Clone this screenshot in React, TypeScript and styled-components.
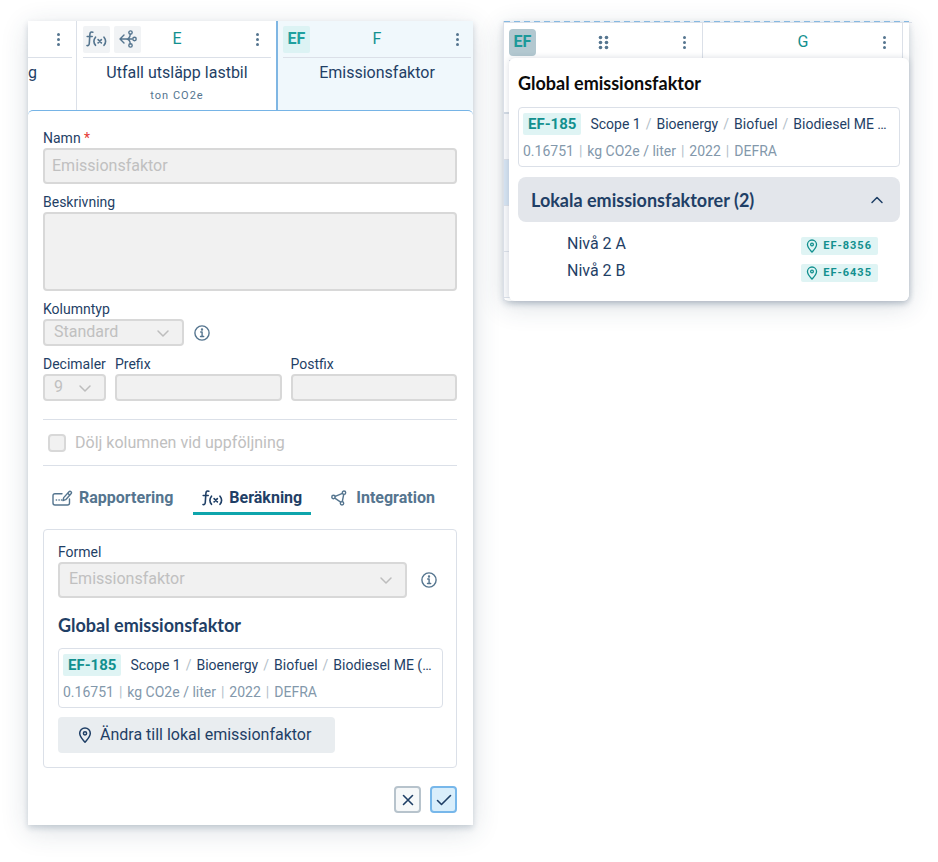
import React, { useId } from 'react';
import styled, { createGlobalStyle, css } from 'styled-components';

const navy = '#1f3f66';
const slate = '#55758f';
const teal = '#12908f';
const line = '#dbe0e8';
const mint = '#dff4f4';

const GlobalStyle = createGlobalStyle`
  *, *::before, *::after { box-sizing: border-box; }
  body {
    margin: 0;
    background: #fff;
    color: ${navy};
    font-family: Roboto, 'Liberation Sans', sans-serif;
    font-size: 16px;
    line-height: 20px;
  }
  button, input, select, textarea { font: inherit; color: inherit; margin: 0; }
  button { cursor: pointer; }
  svg { display: block; flex: none; }
`;

const Page = styled.main`
  display: grid;
  grid-template-columns: minmax(0, 445fr) minmax(0, 406fr);
  align-items: start;
  gap: 30px;
  padding: 21px 29px 36px 28px;
`;

const Surface = styled.section`
  background: #fff;
  box-shadow: 0 3px 6px rgba(40, 70, 100, 0.2), 0 6px 26px rgba(40, 60, 90, 0.16);
`;

/* Column headers */

const ColumnStrip = styled.div`
  display: grid;
  grid-template-columns: 48px 200px minmax(0, 1fr);
  height: 89px;
  overflow: hidden;
`;

const Column = styled.div<{ $active?: boolean; $cut?: boolean }>`
  padding: ${(p) => (p.$cut ? '0 4px 0 0' : '0 5px 0 6px')};
  border-left: 1px solid ${(p) => (p.$active ? '#7fb6e3' : line)};
  ${(p) => p.$cut && 'border-left: 0;'}
  ${(p) => p.$active && css`
    border-left-width: 2px;
    padding: 0 2px 0 5px;
    background: #f0f8fc;
  `}
`;

const ColumnTop = styled.div`
  display: grid;
  grid-template-columns: 1fr auto 1fr;
  align-items: center;
  height: 37px;
  border-bottom: 1px solid ${line};
`;

const IconGroup = styled.div`
  display: flex;
  gap: 4px;
`;

const Letter = styled.span`
  color: ${teal};
`;

const Grip = styled.span`
  color: ${slate};
`;

const tileTones = {
  grey: css`background: #f1f3f5; color: ${slate};`,
  mint: css`background: #dcf3f4; color: #1fa09f;`,
  pressed: css`background: #b3c8d0; color: #1c9999; border-radius: 4px;`,
};

const Tile = styled.button<{ $tone: keyof typeof tileTones }>`
  display: grid;
  place-items: center;
  width: 27px;
  height: 27px;
  padding: 0;
  border: 0;
  border-radius: 2px;
  font-weight: 700;
  ${(p) => tileTones[p.$tone]}
`;

const MenuButton = styled.button`
  justify-self: end;
  display: grid;
  place-items: center;
  width: 28px;
  height: 27px;
  padding: 0;
  border: 0;
  background: none;
  color: ${slate};
`;

const ColumnName = styled.div`
  margin-top: 5px;
  text-align: center;
  white-space: nowrap;
`;

const CutName = styled(ColumnName)`
  text-align: left;
`;

const Unit = styled.div`
  margin-top: 3px;
  text-align: center;
  font-size: 11px;
  letter-spacing: 1px;
  color: ${slate};
`;

/* Editor form */

const Form = styled.form`
  display: flex;
  flex-direction: column;
  padding: 17px 16px 12px 15px;
  border-top: 1px solid #76b4e6;
  border-radius: 5px 5px 0 0;
  background: #fff;
`;

const Label = styled.label`
  display: block;
  font-size: 14px;
  line-height: 20px;
  white-space: nowrap;
`;

const Required = styled.span`
  color: #e53935;
`;

const Field = styled.div<{ $grow?: boolean }>`
  display: flex;
  flex-direction: column;
  margin-bottom: 8px;
  min-width: 0;
  ${(p) => p.$grow && 'flex: 1;'}
`;

const FieldRow = styled.div`
  display: flex;
  gap: 9px;
`;

const control = css`
  width: 100%;
  border: 2px solid #d8d8d8;
  border-radius: 4px;
  background: #f1f1f1;
  color: #c0c0c0;
  opacity: 1;
`;

const TextInput = styled.input<{ $small?: boolean }>`
  ${control}
  height: ${(p) => (p.$small ? 27 : 36)}px;
  padding: 0 7px 2px;
`;

const TextArea = styled.textarea`
  ${control}
  display: block;
  height: 79px;
  resize: none;
`;

const SelectBox = styled.div<{ $width?: number }>`
  position: relative;
  min-width: 0;
  ${(p) => (p.$width ? `width: ${p.$width}px;` : 'flex: 1;')}
`;

const NativeSelect = styled.select<{ $small?: boolean }>`
  ${control}
  display: block;
  appearance: none;
  height: ${(p) => (p.$small ? 27 : 36)}px;
  padding: 0 28px 2px 9px;
`;

const Arrow = styled.span`
  position: absolute;
  right: 14px;
  top: 50%;
  transform: translateY(-50%);
  color: #bdbdbd;
  pointer-events: none;
`;

const WithInfo = styled.div`
  display: flex;
  align-items: center;
  gap: 10px;
`;

const FormulaRow = styled(WithInfo)`
  gap: 14px;
  padding-right: 6px;
`;

const InfoButton = styled.button`
  padding: 0;
  border: 0;
  background: none;
  color: ${slate};
`;

const HideRow = styled.label`
  display: flex;
  align-items: center;
  gap: 9px;
  height: 47px;
  margin-top: 10px;
  padding-left: 5px;
  border: solid ${line};
  border-width: 1px 0;
  color: #c0c0c0;
`;

const Checkbox = styled.input`
  appearance: none;
  width: 18px;
  height: 18px;
  border: 2px solid #d8d8d8;
  border-radius: 4px;
  background: #f1f1f1;
`;

const Tabs = styled.div`
  display: flex;
  gap: 11px;
  margin-top: 16px;
`;

const Tab = styled.button<{ $active?: boolean }>`
  display: flex;
  align-items: center;
  gap: 6px;
  height: 33px;
  padding: 2px 9px 0;
  border: 0;
  border-bottom: 3px solid ${(p) => (p.$active ? '#0ea5ac' : 'transparent')};
  background: none;
  color: ${(p) => (p.$active ? navy : slate)};
  font-weight: 700;
  white-space: nowrap;
`;

const TabPanel = styled.div`
  margin-top: 14px;
  padding: 12px 13px 14px 14px;
  border: 1px solid ${line};
  border-radius: 4px;
`;

const Heading = styled.h2<{ $black?: boolean }>`
  margin: 0;
  font-family: Lato, Roboto, sans-serif;
  font-size: 18px;
  line-height: 20px;
  font-weight: 700;
  color: ${(p) => (p.$black ? '#0b0b0b' : navy)};
`;

const PanelHeading = styled(Heading)`
  margin: 17px 0 13px;
`;

/* Emission factor card */

const Card = styled.article`
  height: 60px;
  padding: 5px 10px 0 4px;
  border: 1px solid ${line};
  border-radius: 4px;
  background: #fff;
`;

const CardTop = styled.div`
  display: flex;
  align-items: center;
  gap: 9px;
  height: 22px;
`;

const Code = styled.span`
  padding: 0 5px;
  border-radius: 2px;
  background: ${mint};
  color: ${teal};
  font-size: 15px;
  line-height: 22px;
  font-weight: 700;
  white-space: nowrap;
`;

const Path = styled.span`
  flex: 1;
  min-width: 0;
  overflow: hidden;
  text-overflow: ellipsis;
  white-space: nowrap;
  font-size: 14px;
  i { margin: 0 5px; font-style: normal; color: #b4bfca; }
`;

const Facts = styled.div`
  margin-top: 6px;
  font-size: 14px;
  line-height: 20px;
  color: #8398ab;
  white-space: nowrap;
  i { margin: 0 5px; font-style: normal; color: #b4bfca; }
`;

const LocalButton = styled.button`
  display: flex;
  align-items: center;
  gap: 8px;
  height: 36px;
  margin-top: 9px;
  padding: 0 24px 0 20px;
  border: 0;
  border-radius: 4px;
  background: #e9edf0;
  white-space: nowrap;
`;

const Footer = styled.div`
  display: flex;
  justify-content: flex-end;
  gap: 9px;
  margin-top: 18px;
`;

const SquareButton = styled.button<{ $primary?: boolean }>`
  display: grid;
  place-items: center;
  width: 27px;
  height: 27px;
  padding: 0;
  border: 2px solid ${(p) => (p.$primary ? '#77b7ea' : '#b7c3cc')};
  border-radius: 4px;
  background: ${(p) => (p.$primary ? '#d9eefb' : '#f6f8f9')};
`;

/* Sheet with popover */

const SheetPreview = styled(Surface)`
  display: grid;
  border-radius: 0 0 6px 6px;
  > * { grid-area: 1 / 1; min-width: 0; }
`;

const Sheet = styled.div`
  border-left: 1px solid ${line};
  background: repeating-linear-gradient(90deg, #86b9e2 0 6px, #e2eef8 6px 10px) top / 100% 1px no-repeat;
`;

const SheetHead = styled.div`
  display: grid;
  grid-template-columns: 198px 200px 1fr;
  height: 93px;
  padding-top: 1px;
  border-bottom: 2px solid #d3dbe4;
`;

const SheetColumn = styled.div<{ $first?: boolean }>`
  padding: 1px 4px 0 5px;
  border-top: 1px solid ${line};
  ${(p) => !p.$first && `border-left: 1px solid ${line};`}
`;

const SheetRow = styled.div<{ $selected?: boolean }>`
  height: 46px;
  border-bottom: 1px solid ${line};
  background: ${(p) => (p.$selected ? '#d5e3f1' : '#f7f8fa')};
`;

const Popover = styled.div`
  margin: 37px 0 0 6px;
  padding: 15px 9px 16px;
  border-radius: 6px;
  background: #fff;
  box-shadow: 0 0 6px rgba(40, 60, 90, 0.18);
`;

const PopoverHeading = styled(Heading)`
  margin-bottom: 14px;
`;

const Accordion = styled.button`
  display: flex;
  align-items: center;
  justify-content: space-between;
  width: 100%;
  height: 45px;
  margin: 10px 0 9px;
  padding: 0 16px 0 13px;
  border: 0;
  border-radius: 8px;
  background: #e3e6eb;
  text-align: left;
`;

const LocalList = styled.ul`
  margin: 0;
  padding: 0 22px 0 49px;
  list-style: none;
`;

const LocalItem = styled.li`
  display: flex;
  align-items: center;
  justify-content: space-between;
  height: 27px;
  padding-bottom: 2px;
`;

const LocalCode = styled.span`
  display: flex;
  align-items: center;
  gap: 5px;
  height: 18px;
  margin-top: 4px;
  padding: 0 6px 0 5px;
  border-radius: 2px;
  background: ${mint};
  color: ${teal};
  font-size: 11px;
  font-weight: 700;
  letter-spacing: 1px;
`;

/* Icons */

const strokeProps = {
  fill: 'none',
  stroke: 'currentColor',
  strokeLinecap: 'round' as const,
  strokeLinejoin: 'round' as const,
};

const Dots = ({ cols = 1 }: { cols?: number }) => (
  <svg width={cols * 6 - 1} height="15" viewBox={`0 0 ${cols * 6 - 1} 15`} fill="currentColor" aria-hidden>
    {Array.from({ length: cols }, (_, c) =>
      [2.5, 7.5, 12.5].map((y) => <circle key={`${c}-${y}`} cx={2.5 + c * 6} cy={y} r={cols > 1 ? 1.8 : 1.5} />),
    )}
  </svg>
);

const FunctionIcon = () => (
  <svg width="21" height="16" viewBox="0 0 21 16" {...strokeProps} strokeWidth="1.6" aria-hidden>
    <path d="M6.800 1.200C5.200.6 4 1.300 3.900 3.200L3.300 12.300C3.200 14.200 2.300 14.900 1 14.500M1.200 5.500H6.200" />
    <path d="M9.500 6.200C7.600 8.600 7.600 11.900 9.500 14.300M18 6.200C19.900 8.600 19.900 11.900 18 14.300" />
    <path d="M12.100 8.600L15.400 11.900M15.400 8.600L12.100 11.900" />
  </svg>
);

const BranchIcon = () => (
  <svg width="18" height="18" viewBox="0 0 18 18" {...strokeProps} strokeWidth="1.4" aria-hidden>
    <path d="M5 5L1 9L5 13M1 9H13M7 9C9.500 9 11 7.500 11.300 4.200M7 9C9.500 9 11 10.500 11.300 13.800" />
    <circle cx="11.500" cy="2.600" r="1.700" />
    <circle cx="15.500" cy="9" r="1.700" />
    <circle cx="11.500" cy="15.400" r="1.700" />
  </svg>
);

const ChevronIcon = ({ up }: { up?: boolean }) => (
  <svg width="14" height="14" viewBox="0 0 14 14" {...strokeProps} strokeWidth="1.500" aria-hidden>
    <path d={up ? 'M2 9.500L7 4.500L12 9.500' : 'M2 5L7 10L12 5'} />
  </svg>
);

const InfoIcon = () => (
  <svg width="16" height="16" viewBox="0 0 16 16" {...strokeProps} strokeWidth="1.400" aria-hidden>
    <circle cx="8" cy="8" r="7.100" />
    <path d="M6.700 7H8.100V11.500M6.500 11.500H9.700" />
    <circle cx="8" cy="4.500" r="0.500" fill="currentColor" />
  </svg>
);

const ReportIcon = () => (
  <svg width="21" height="16" viewBox="0 0 21 16" {...strokeProps} strokeWidth="1.400" aria-hidden>
    <path d="M10 3.800H3Q1 3.800 1 5.800V13Q1 15 3 15H15.500Q17.500 15 17.500 13V9" />
    <path d="M11 10.500L11.700 7.600L17 1.800Q18 .8 19 1.800Q20 2.800 19 3.800L13.700 9.700ZM15.800 3.200L17.800 5.200" />
    <path d="M4.300 10H4.500M7 10H7.200M9.500 10H9.700" strokeWidth="1.600" />
  </svg>
);

const NetworkIcon = () => (
  <svg width="19" height="16" viewBox="0 0 19 16" {...strokeProps} strokeWidth="1.400" aria-hidden>
    <circle cx="2.500" cy="7" r="1.700" />
    <circle cx="13" cy="2.700" r="1.700" />
    <circle cx="11" cy="13.300" r="1.700" />
    <path d="M4.200 6.300L11.400 3.400M12.700 4.500L11.300 11.500M3.800 8.200L9.700 12.100" />
  </svg>
);

const PinIcon = ({ size = 16 }: { size?: number }) => (
  <svg width={size - 2} height={size} viewBox="0 0 14 16" {...strokeProps} strokeWidth="1.500" aria-hidden>
    <path d="M7 15.200C4.200 12 1.700 9.600 1.700 6.300A5.300 5.300 0 0 1 12.300 6.300C12.300 9.600 9.800 12 7 15.200Z" />
    <circle cx="7" cy="6.300" r="1.600" />
  </svg>
);

const CrossIcon = () => (
  <svg width="14" height="14" viewBox="0 0 14 14" {...strokeProps} strokeWidth="1.600" aria-hidden>
    <path d="M2.500 2.500L11.500 11.500M11.500 2.500L2.500 11.500" />
  </svg>
);

const CheckIcon = () => (
  <svg width="16" height="14" viewBox="0 0 16 14" {...strokeProps} strokeWidth="1.600" aria-hidden>
    <path d="M1.500 7.500L5.500 11.500L14.500 2.500" />
  </svg>
);

/* Composed parts */

const Menu = () => (
  <MenuButton type="button" aria-label="Kolumnmeny"><Dots /></MenuButton>
);

const Info = () => (
  <InfoButton type="button" aria-label="Information"><InfoIcon /></InfoButton>
);

interface SelectProps { id: string; value: string; width?: number; small?: boolean }

const Select = ({ id, value, width, small }: SelectProps) => (
  <SelectBox $width={width}>
    <NativeSelect id={id} $small={small} disabled defaultValue={value}>
      <option>{value}</option>
    </NativeSelect>
    <Arrow><ChevronIcon /></Arrow>
  </SelectBox>
);

const FactorCard = ({ source }: { source: string }) => (
  <Card>
    <CardTop>
      <Code>EF-185</Code>
      <Path>Scope 1<i>/</i>Bioenergy<i>/</i>Biofuel<i>/</i>{source}</Path>
    </CardTop>
    <Facts>0.16751<i>|</i>kg CO2e / liter<i>|</i>2022<i>|</i>DEFRA</Facts>
  </Card>
);

const locals = [
  { name: 'Nivå 2 A', code: 'EF-8356' },
  { name: 'Nivå 2 B', code: 'EF-6435' },
];

export default function App() {
  const id = useId();
  return (
    <>
      <GlobalStyle />
      <Page>
        <Surface>
          <ColumnStrip>
            <Column $cut>
              <ColumnTop><span /><span /><Menu /></ColumnTop>
              <CutName>g</CutName>
            </Column>
            <Column>
              <ColumnTop>
                <IconGroup>
                  <Tile type="button" $tone="grey" aria-label="Formel"><FunctionIcon /></Tile>
                  <Tile type="button" $tone="grey" aria-label="Koppling"><BranchIcon /></Tile>
                </IconGroup>
                <Letter>E</Letter>
                <Menu />
              </ColumnTop>
              <ColumnName>Utfall utsläpp lastbil</ColumnName>
              <Unit>ton CO2e</Unit>
            </Column>
            <Column $active>
              <ColumnTop>
                <Tile type="button" $tone="mint">EF</Tile>
                <Letter>F</Letter>
                <Menu />
              </ColumnTop>
              <ColumnName>Emissionsfaktor</ColumnName>
            </Column>
          </ColumnStrip>

          <Form onSubmit={(e) => e.preventDefault()}>
            <Field>
              <Label htmlFor={`${id}-name`}>Namn <Required>*</Required></Label>
              <TextInput id={`${id}-name`} defaultValue="Emissionsfaktor" disabled />
            </Field>
            <Field>
              <Label htmlFor={`${id}-desc`}>Beskrivning</Label>
              <TextArea id={`${id}-desc`} disabled />
            </Field>
            <Field>
              <Label htmlFor={`${id}-type`}>Kolumntyp</Label>
              <WithInfo>
                <Select id={`${id}-type`} value="Standard" width={141} small />
                <Info />
              </WithInfo>
            </Field>
            <FieldRow>
              <Field>
                <Label htmlFor={`${id}-dec`}>Decimaler</Label>
                <Select id={`${id}-dec`} value="9" width={63} small />
              </Field>
              <Field $grow>
                <Label htmlFor={`${id}-pre`}>Prefix</Label>
                <TextInput id={`${id}-pre`} $small disabled />
              </Field>
              <Field $grow>
                <Label htmlFor={`${id}-post`}>Postfix</Label>
                <TextInput id={`${id}-post`} $small disabled />
              </Field>
            </FieldRow>
            <HideRow>
              <Checkbox type="checkbox" disabled />
              Dölj kolumnen vid uppföljning
            </HideRow>
            <Tabs role="tablist">
              <Tab type="button" role="tab"><ReportIcon />Rapportering</Tab>
              <Tab type="button" role="tab" aria-selected $active><FunctionIcon />Beräkning</Tab>
              <Tab type="button" role="tab"><NetworkIcon />Integration</Tab>
            </Tabs>
            <TabPanel role="tabpanel">
              <Label htmlFor={`${id}-formula`}>Formel</Label>
              <FormulaRow>
                <Select id={`${id}-formula`} value="Emissionsfaktor" />
                <Info />
              </FormulaRow>
              <PanelHeading>Global emissionsfaktor</PanelHeading>
              <FactorCard source="Biodiesel ME (…" />
              <LocalButton type="button"><PinIcon />Ändra till lokal emissionfaktor</LocalButton>
            </TabPanel>
            <Footer>
              <SquareButton type="button" aria-label="Avbryt"><CrossIcon /></SquareButton>
              <SquareButton type="submit" $primary aria-label="Spara"><CheckIcon /></SquareButton>
            </Footer>
          </Form>
        </Surface>

        <SheetPreview>
          <Sheet>
            <SheetHead>
              <SheetColumn $first>
                <ColumnTop>
                  <Tile type="button" $tone="pressed">EF</Tile>
                  <Grip><Dots cols={2} /></Grip>
                  <Menu />
                </ColumnTop>
              </SheetColumn>
              <SheetColumn>
                <ColumnTop><span /><Letter>G</Letter><Menu /></ColumnTop>
              </SheetColumn>
              <SheetColumn />
            </SheetHead>
            <SheetRow />
            <SheetRow $selected />
            <SheetRow />
            <SheetRow />
          </Sheet>
          <Popover>
            <PopoverHeading $black>Global emissionsfaktor</PopoverHeading>
            <FactorCard source="Biodiesel ME …" />
            <Accordion type="button" aria-expanded>
              <Heading as="span">Lokala emissionsfaktorer (2)</Heading>
              <ChevronIcon up />
            </Accordion>
            <LocalList>
              {locals.map((item) => (
                <LocalItem key={item.code}>
                  {item.name}
                  <LocalCode><PinIcon size={14} />{item.code}</LocalCode>
                </LocalItem>
              ))}
            </LocalList>
          </Popover>
        </SheetPreview>
      </Page>
    </>
  );
}
